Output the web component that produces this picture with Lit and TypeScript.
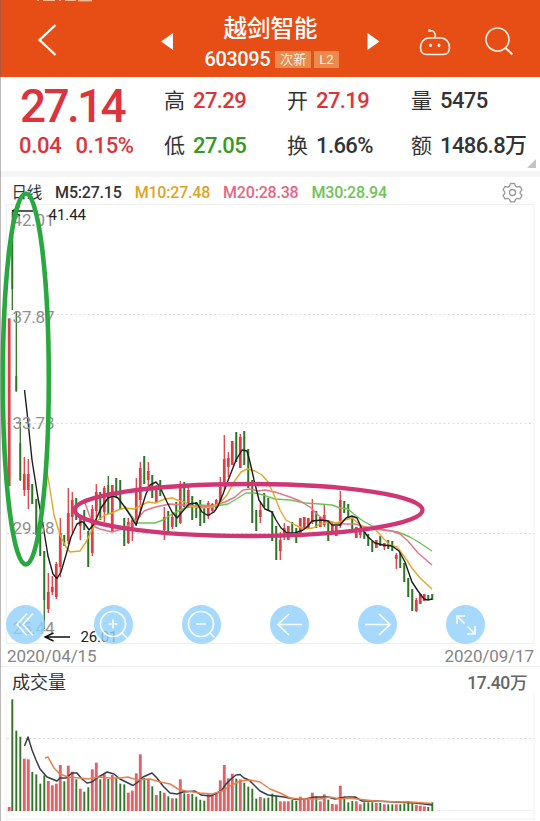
import { LitElement, html, svg, css } from 'lit';
import { customElement, property } from 'lit/decorators.js';

type Point = [number, number];

const STEP = 4;
const FIRST_X = 8.3;
const CHART_TOP = 204;
const VOLUME_TOP = 692;
const VOLUME_BASE = 119;

// one row per day: direction, high, low, then body top and bottom when they differ
const candles: [string, number, number, number?, number?][] = [
  ['r', 318.5, 486], ['g', 212, 310, 236, 289], ['g', 311, 391.5, 376, 391.5], ['g', 422, 481, 443, 480],
  ['r', 457, 496, 474, 490], ['r', 459, 509, 474, 490], ['g', 484, 504], ['g', 499, 535],
  ['g', 524, 556], ['g', 551, 629, 551, 600], ['r', 573, 613, 592, 609], ['r', 576, 595, 587, 592],
  ['r', 562, 599, 564, 597], ['r', 518, 577, 533, 567], ['g', 535, 546], ['r', 488, 544, 513, 541],
  ['r', 492, 533, 500, 517], ['g', 498, 520], ['r', 517, 540, 517, 526], ['g', 510, 530],
  ['g', 531, 567], ['r', 505, 556, 509, 553], ['r', 484, 521, 492, 511], ['g', 492, 520],
  ['r', 486, 522, 488, 512], ['g', 476, 514, 485, 514], ['r', 485, 532], ['g', 478, 497],
  ['g', 480, 510], ['g', 518, 546], ['r', 518, 544, 522, 543], ['r', 516, 541, 520, 528],
  ['r', 478, 526, 488, 524], ['r', 462, 517, 468, 500], ['g', 456, 484], ['r', 462, 488, 471, 480],
  ['g', 475, 498], ['r', 485, 503, 490, 502], ['g', 480, 496], ['r', 507, 540, 517, 530],
  ['g', 511, 532], ['r', 514, 529, 517, 527], ['g', 502, 527], ['r', 481, 524, 488, 523],
  ['g', 482, 507], ['r', 487, 507, 490, 503], ['g', 496, 520], ['g', 502, 518],
  ['g', 500, 526], ['g', 505, 523], ['r', 501, 519, 503, 516], ['r', 503, 513, 504, 511],
  ['r', 499, 510, 500, 508], ['r', 477, 503, 487, 501], ['r', 435, 490, 459, 482], ['r', 452, 477, 458, 467],
  ['r', 441, 465], ['g', 432, 462], ['r', 434, 468, 437, 468], ['g', 431, 465],
  ['g', 449, 488], ['g', 480, 523], ['g', 510, 531], ['r', 502, 523, 510, 517],
  ['g', 493, 507], ['g', 498, 511], ['g', 511, 541], ['g', 526, 560],
  ['r', 532, 560, 540, 551], ['r', 523, 540, 528, 534], ['r', 526, 540], ['g', 522, 535],
  ['g', 528, 543], ['r', 518, 533], ['r', 517, 529], ['r', 518, 529],
  ['r', 499, 524, 511, 522], ['g', 511, 528], ['r', 517, 527], ['r', 504, 527, 515, 525],
  ['g', 520, 541], ['r', 523, 534, 525, 531], ['r', 526, 536], ['r', 491, 528, 500, 526],
  ['g', 501, 513], ['g', 504, 517], ['g', 516, 529], ['r', 527, 538],
  ['r', 526, 538, 530, 535], ['g', 528, 539], ['g', 534, 546], ['g', 541, 552],
  ['r', 540, 548], ['g', 536, 546], ['r', 543, 550, 543, 547], ['g', 540, 549],
  ['g', 541, 551], ['r', 553, 569, 555, 559], ['g', 552, 568], ['g', 563, 582],
  ['g', 578, 597], ['g', 589, 611], ['r', 598, 612, 600, 611], ['r', 594, 604],
  ['r', 594, 601], ['g', 595, 600], ['g', 594, 600],
];

// bar heights in thirds of a pixel
const volumes = [
  12, 335, 241, 223, 157, 155, 117, 110, 82, 107, 90, 77, 82, 138, 89, 136, 118, 95, 67, 58,
  71, 125, 145, 95, 110, 96, 108, 100, 82, 80, 55, 61, 113, 170, 99, 97, 74, 48, 60, 55,
  44, 38, 38, 95, 53, 51, 51, 43, 34, 31, 50, 48, 52, 92, 138, 98, 112, 97, 95, 85,
  73, 67, 37, 42, 38, 40, 52, 47, 29, 29, 29, 33, 30, 43, 33, 35, 55, 43, 29, 50,
  34, 21, 20, 76, 38, 26, 30, 29, 20, 26, 26, 26, 24, 24, 20, 20, 20, 20, 20, 22,
  30, 22, 18, 16, 14, 12, 26,
];

const averages: { color: string; points: Point[] }[] = [
  {
    color: '#6cc455',
    points: [[125, 506], [130, 514], [137, 523], [155, 523], [163, 520], [172, 514], [185, 508], [200, 505],
      [215, 506], [228, 504], [238, 498], [246, 493], [255, 493], [263, 495], [275, 499], [290, 500],
      [305, 503], [320, 504], [332, 505], [340, 508], [348, 509], [355, 515], [363, 521], [372, 526],
      [385, 530], [398, 532], [410, 537], [420, 543], [432, 551]],
  },
  {
    color: '#e7738a',
    points: [[85, 503], [90, 517], [95, 527], [100, 529], [112, 532], [122, 529], [130, 524], [137, 520],
      [144, 511], [152, 508], [160, 506], [170, 504], [185, 505], [200, 507], [212, 506], [225, 502],
      [235, 497], [243, 490], [250, 489], [258, 491], [265, 490], [275, 492], [290, 497], [300, 501],
      [310, 507], [318, 515], [325, 520], [335, 523], [345, 524], [355, 524], [370, 528], [382, 530],
      [392, 531], [400, 534], [408, 541], [418, 553], [432, 565]],
  },
  {
    color: '#e5a62c',
    points: [[45, 462], [49, 483], [54, 515], [60, 535], [66, 547], [70, 552], [80, 551], [86, 542],
      [92, 530], [98, 520], [105, 515], [112, 513], [118, 510], [125, 508], [134, 509], [142, 505],
      [148, 502], [155, 503], [165, 499], [172, 498], [180, 501], [185, 502], [190, 506], [200, 508],
      [212, 507], [220, 503], [227, 495], [234, 482], [241, 472], [247, 469], [255, 471], [262, 475],
      [268, 482], [274, 495], [280, 510], [286, 520], [295, 525], [305, 529], [313, 528], [320, 524],
      [330, 522], [336, 523], [345, 520], [352, 518], [358, 523], [365, 528], [374, 528], [382, 537],
      [390, 545], [397, 547], [404, 556], [412, 568], [420, 578], [432, 589]],
  },
  {
    color: '#1d1d1d',
    points: [[24.5, 390], [27, 412], [32, 460], [38, 498], [43, 525], [48, 556], [53, 574], [57, 578.5],
      [61, 572], [66, 555], [71, 537], [77, 524], [82, 521.5], [85, 524], [89, 530], [94, 524],
      [101, 508], [108, 498], [113, 496], [118, 498], [124, 506], [130, 515], [136, 525], [140, 513],
      [146, 494], [150, 485], [156, 482], [160, 487], [167, 502], [172, 512], [177, 518], [182, 512],
      [189, 504], [197, 503], [202, 512], [208, 515.5], [214, 512], [218, 506], [223, 494], [229, 478],
      [236, 460], [242, 450], [247, 451], [250, 462], [254, 480], [259, 500], [265, 509], [272, 512],
      [276, 520], [281, 528], [287, 533], [295, 533], [303, 530], [308, 526], [312, 521], [322, 520],
      [328, 521], [332, 525], [340, 525], [346, 518], [352, 516], [357, 518], [361, 527], [368, 537],
      [375, 543], [383, 545], [392, 546], [399, 551], [405, 562], [412, 582], [418, 591], [424, 599],
      [428, 600], [432, 599]],
  },
];

const volumeAverages: { color: string; points: Point[] }[] = [
  {
    color: '#363c4a',
    points: [[24.5, 746], [28, 737], [32, 750], [36, 760], [40, 769], [47, 777], [52, 779], [57, 781],
      [60, 778], [66, 778], [72, 773], [77, 773], [82, 779], [87, 783], [92, 782], [97, 778],
      [107, 772], [114, 774], [120, 779], [128, 783], [133, 785.5], [138, 782], [143, 777], [152, 773],
      [157, 778], [163, 786], [170, 793], [177, 794], [183, 792], [195, 791], [201, 795], [210, 796],
      [217, 793], [222, 790], [226, 784], [231, 779], [236, 775], [240, 774.5], [244, 778], [249, 780],
      [254, 785], [260, 791], [268, 795], [276, 796], [284, 797], [296, 799.5], [305, 799], [315, 797],
      [328, 797], [335, 799], [345, 797], [355, 797], [362, 801], [375, 801], [395, 802], [415, 803],
      [424, 804], [432, 805]],
  },
  {
    color: '#ee7d4c',
    points: [[45, 758], [48, 757], [54, 768], [60, 774], [68, 777], [80, 778], [88, 779], [98, 777],
      [110, 778], [120, 778], [128, 777], [137, 780], [150, 779], [160, 782], [170, 784], [178, 789],
      [186, 791], [200, 793], [212, 794], [222, 791], [230, 786], [240, 781], [250, 780], [260, 782],
      [270, 789], [280, 793], [290, 798], [300, 799], [320, 799], [330, 797], [340, 799], [348, 798],
      [357, 799], [375, 801], [400, 802], [410, 802], [425, 803], [432, 803.5]],
  },
];

const toPoints = (points: Point[], top: number) => points.map(([x, y]) => `${x},${y - top}`).join(' ');

@customElement('stock-header')
export class StockHeader extends LitElement {
  static styles = [
    css`
      :host {
        display: grid;
        grid-template-columns: 150px 1fr 150px;
        height: 77px;
        background: #e64e16;
        color: #fff;
        position: relative;
      }
      .status {
        position: absolute;
        left: 36px;
        top: 0;
      }
      .side {
        display: flex;
        align-items: center;
        padding: 3px 0 0 36px;
      }
      .right {
        justify-content: space-between;
        margin-left: 29px;
        padding: 6px 26px 0 0;
      }
      .middle {
        display: flex;
        justify-content: space-between;
        padding: 0 10px 0 11px;
      }
      .arrow {
        margin-top: 33px;
      }
      .title {
        display: flex;
        flex-direction: column;
        align-items: center;
        padding-top: 14px;
      }
      .name {
        font: 500 23.5px/27px 'Noto Sans CJK SC', sans-serif;
      }
      .code {
        display: flex;
        align-items: center;
        gap: 5px;
        height: 20px;
        margin-top: 8px;
        font: 500 20px/20px Roboto, sans-serif;
        letter-spacing: -0.4px;
      }
      .code b {
        font: 400 13px/17px Roboto, 'Noto Sans CJK SC', sans-serif;
        letter-spacing: 0;
        background: #ea8a4c;
        color: #fff3e2;
        padding: 0 5px;
        margin-right: -2px;
      }
    `,
  ];

  render() {
    return html`
      <svg class="status" width="58" height="2" fill="#f6b795">
        <rect x="1" width="2" height="1" /><rect x="7" width="12" height="1" />
        <rect x="23" width="2" height="1" /><rect x="29" width="11" height="1" />
        <rect x="42" width="14" height="1.4" />
      </svg>
      <div class="side">
        <svg width="24" height="34" fill="none" stroke="#fff" stroke-width="2.4">
          <path d="M19.5 2 3.6 17l15.9 15" />
        </svg>
      </div>
      <div class="middle">
        <svg class="arrow" width="13" height="17" fill="#fff"><path d="M0 8.5 12 0v17z" /></svg>
        <div class="title">
          <div class="name">越剑智能</div>
          <div class="code"><span>603095</span><b>次新</b><b>L2</b></div>
        </div>
        <svg class="arrow" width="13" height="17" fill="#fff"><path d="M12.5 8.5.5 0v17z" /></svg>
      </div>
      <div class="side right">
        <svg width="32" height="30" fill="none" stroke="#fff0e4" stroke-width="1.6">
          <path d="M10 11h12c5.5 0 8.500 5 8.500 9.500s-2 7-6.500 7H8c-4.500 0-6.500-2.500-6.500-7S4.500 11 10 11Z" />
          <path d="M16 11c1-5-1-7.500-5-7.500" />
          <circle cx="10.5" cy="3.700" r="1.4" fill="#fff0e4" stroke="none" />
          <ellipse cx="11.5" cy="18.300" rx="1.400" ry="1.900" fill="#fff0e4" stroke="none" />
          <ellipse cx="20" cy="18.300" rx="1.400" ry="1.900" fill="#fff0e4" stroke="none" />
        </svg>
        <svg width="30" height="30" fill="none" stroke="#fff0e4" stroke-width="1.6">
          <circle cx="13.5" cy="12.5" r="11.5" />
          <path d="m21.5 21 7 6.500" stroke-width="2" />
        </svg>
      </div>
    `;
  }
}

@customElement('quote-panel')
export class QuotePanel extends LitElement {
  static styles = [
    css`
      :host {
        display: grid;
        grid-template-columns: 143px 123px 124px 1fr;
        height: 95px;
        padding-left: 21px;
        box-sizing: border-box;
        position: relative;
        background: #fff;
        font: 500 22px/26px Roboto, 'Noto Sans CJK SC', sans-serif;
        letter-spacing: -0.6px;
        color: #333;
        border-bottom: 1px solid #f6f6f6;
      }
      .up {
        color: #dc343c;
      }
      .down {
        color: #349a24;
      }
      .price {
        font-size: 46px;
        line-height: 46px;
        letter-spacing: -2.7px;
        margin: 6px 0 4px -1px;
      }
      .change {
        display: flex;
        gap: 14px;
        margin-left: -2px;
        letter-spacing: -0.3px;
      }
      .column {
        display: grid;
        grid-template-rows: 26px 26px;
        row-gap: 19px;
        padding-top: 11px;
      }
      .cell {
        display: flex;
        gap: 8px;
        white-space: nowrap;
      }
      .cell b {
        font: 400 21px/22px 'Noto Sans CJK SC', sans-serif;
        letter-spacing: 0;
      }
      .corner {
        position: absolute;
        right: 4px;
        bottom: 3px;
      }
    `,
  ];

  cell(label: string, value: string, tone = '') {
    return html`<div class="cell"><b>${label}</b><span class=${tone}>${value}</span></div>`;
  }

  render() {
    return html`
      <div class="up">
        <div class="price">27.14</div>
        <div class="change"><span>0.04</span><span>0.15%</span></div>
      </div>
      <div class="column">${this.cell('高', '27.29', 'up')}${this.cell('低', '27.05', 'down')}</div>
      <div class="column">${this.cell('开', '27.19', 'up')}${this.cell('换', '1.66%')}</div>
      <div class="column">${this.cell('量', '5475')}${this.cell('额', '1486.8万')}</div>
      <svg class="corner" width="9" height="9" fill="#c4c4c4"><path d="M9 0v9H0z" /></svg>
    `;
  }
}

@customElement('chart-button')
export class ChartButton extends LitElement {
  @property() icon = '';

  static styles = [
    css`
      :host {
        display: block;
        width: 39px;
        height: 39px;
        border-radius: 50%;
        background: rgba(148, 209, 252, 0.82);
      }
      svg {
        display: block;
        fill: none;
        stroke: #f7fcff;
        stroke-width: 1.7;
      }
    `,
  ];

  shape() {
    switch (this.icon) {
      case 'first':
        return svg`<path d="M21 8.5 11 19.5l10 11M27 8.5 17 19.5l10 11" />`;
      case 'in':
        return svg`<circle cx="19" cy="19" r="12.5" /><path d="M14.5 19h9M19 14.5v9M28 28l5.5 5.5" />`;
      case 'out':
        return svg`<circle cx="19" cy="19" r="12.5" /><path d="M14 19h10M28 28l4.5 4.5" />`;
      case 'left':
        return svg`<path d="M32 19.5H8M19 9 8 19.5 19 30" />`;
      case 'right':
        return svg`<path d="M7 19.5h24M21 9l11 10.5L21 30" />`;
      default:
        return svg`<path d="M11 19v-8h8M11 11l7.5 7.5M21.5 21.5 29 29M29 21v8h-8" />`;
    }
  }

  render() {
    return html`<svg width="39" height="39">${this.shape()}</svg>`;
  }
}

@customElement('price-chart')
export class PriceChart extends LitElement {
  static styles = [
    css`
      :host {
        display: block;
        position: relative;
        height: 440px;
      }
      svg {
        display: block;
      }
      .axis {
        font: 400 17px Roboto, sans-serif;
        fill: #8f8f8f;
      }
      .mark {
        font: 400 15px Roboto, sans-serif;
        fill: #222;
      }
      .tools {
        position: absolute;
        left: 6px;
        top: 400.5px;
        display: flex;
        gap: 49px;
      }
    `,
  ];

  candle([tone, high, low, top, bottom]: (typeof candles)[number], i: number) {
    const x = FIRST_X + STEP * i + (i ? 0 : 0.9);
    const color = tone === 'r' ? '#dd3f46' : '#2f7426';
    const width = tone === 'r' ? 2.8 : 1.9;
    const from = top ?? high;
    const to = bottom ?? low;
    return svg`
      <rect x=${x - 0.65} y=${high - CHART_TOP} width="1.3" height=${low - high} fill=${color} />
      <rect x=${x - width / 2} y=${from - CHART_TOP} width=${width} height=${to - from} fill=${color} />
    `;
  }

  label(text: string, y: number) {
    return svg`<text class="axis" x="12.5" y=${y} textLength="42">${text}</text>`;
  }

  render() {
    return html`
      <svg width="540" height="440">
        <path d="M6.5 .5H534V439.5H6.5Z" fill="none" stroke="#efefef" />
        <path d="M7 110.5H534M7 219.5H534M7 329.5H534" stroke="#dcdcdc" stroke-dasharray="2 2.5" />
        ${candles.map((c, i) => this.candle(c, i))}
        ${averages.map(
          (a) => svg`<polyline points=${toPoints(a.points, CHART_TOP)} fill="none" stroke=${a.color}
            stroke-width="1.4" stroke-linejoin="round" />`,
        )}
        ${this.label('42.01', 22)} ${this.label('37.87', 119)} ${this.label('33.73', 224.5)}
        ${this.label('29.58', 329.5)} ${this.label('25.44', 430)}
        <path d="M12 7h21M12 7l8-4.500M12 7l8 4.500" fill="none" stroke="#222" stroke-width="1.3" />
        <text class="mark" x="48.5" y="16" textLength="37.5">41.44</text>
        <path d="M45 433h25M53.5 429 45 433l8.500 4" fill="none" stroke="#111" stroke-width="1.4" />
        <text class="mark" x="80.5" y="438" textLength="37">26.01</text>
      </svg>
      <div class="tools">
        ${['first', 'in', 'out', 'left', 'right', 'full'].map(
          (icon) => html`<chart-button icon=${icon}></chart-button>`,
        )}
      </div>
    `;
  }
}

@customElement('volume-chart')
export class VolumeChart extends LitElement {
  static styles = [
    css`
      :host {
        display: block;
        height: 129px;
      }
      svg {
        display: block;
      }
    `,
  ];

  render() {
    return html`
      <svg width="540" height="129">
        <path d="M6.5 0V129M534 0V129" stroke="#f3f3f3" />
        <path d="M7 46.5H534" stroke="#dcdcdc" stroke-dasharray="2 2.5" />
        <path d="M7 118.5H534M7 127H534" stroke="#f1f1f1" />
        ${volumes.map((v, i) => {
          const red = candles[i][0] === 'r';
          const width = red ? 2.9 : 1.9;
          const x = FIRST_X + STEP * i + (i ? 0 : 0.9);
          return svg`<rect x=${x - width / 2} y=${VOLUME_BASE - v / 3} width=${width} height=${v / 3}
            fill=${red ? '#e0636a' : '#33742a'} />`;
        })}
        ${volumeAverages.map(
          (a) => svg`<polyline points=${toPoints(a.points, VOLUME_TOP)} fill="none" stroke=${a.color}
            stroke-width="1.5" stroke-linejoin="round" />`,
        )}
      </svg>
    `;
  }
}

@customElement('app-root')
export class AppRoot extends LitElement {
  static styles = [
    css`
      :host {
        display: block;
        position: relative;
        width: 540px;
        height: 821px;
        overflow: hidden;
        background: #fff;
        font-family: Roboto, 'Noto Sans CJK SC', sans-serif;
      }
      .band {
        height: 5px;
        background: #f5f5f5;
      }
      .legend {
        display: flex;
        align-items: center;
        gap: 13px;
        height: 27px;
        padding: 3px 17px 0 11.5px;
        box-sizing: border-box;
        font-size: 16px;
        font-weight: 500;
        letter-spacing: -0.2px;
        color: #333;
        white-space: nowrap;
      }
      .period {
        font: 400 15.5px/20px 'Noto Sans CJK SC', sans-serif;
        margin-top: -2px;
      }
      .m10 {
        color: #dfa31f;
      }
      .m20 {
        color: #e36783;
      }
      .m30 {
        color: #6fc257;
      }
      .gear {
        margin-left: auto;
      }
      .dates {
        display: flex;
        justify-content: space-between;
        align-items: center;
        height: 23px;
        padding: 1px 6px 0 7px;
        box-sizing: border-box;
        font-size: 17px;
        letter-spacing: -0.1px;
        color: #858585;
        border-bottom: 1px solid #efefef;
      }
      .volume {
        display: flex;
        justify-content: space-between;
        align-items: center;
        height: 25px;
        padding: 3px 13px 0 12px;
        box-sizing: border-box;
        font-size: 18px;
        color: #333;
      }
      .total {
        font-size: 17.5px;
        font-weight: 500;
        letter-spacing: -0.4px;
        color: #666;
      }
      .edge {
        position: absolute;
        left: 0;
        top: 0;
        width: 1px;
        height: 821px;
        background: rgba(110, 100, 100, 0.45);
      }
      .rings {
        position: absolute;
        left: 0;
        top: 0;
        fill: none;
      }
    `,
  ];

  render() {
    return html`
      <stock-header></stock-header>
      <quote-panel></quote-panel>
      <div class="band"></div>
      <div class="legend">
        <span class="period">日线</span>
        <span>M5:27.15</span>
        <span class="m10">M10:27.48</span>
        <span class="m20">M20:28.38</span>
        <span class="m30">M30:28.94</span>
        <svg class="gear" width="21" height="21" fill="none" stroke="#999" stroke-width="1.3">
          <path
            stroke-linejoin="round"
            d="M8.5 1.5h4l1 2.6 1.700 1 2.8-.6 2 3.400-1.800 2v1.600l1.800 2-2 3.400-2.800-.6-1.700 1-1 2.600h-4l-1-2.600-1.700-1-2.800.6-2-3.400 1.800-2V9.900L1 7.900l2-3.400 2.800.6 1.700-1z"
          />
          <circle cx="10.5" cy="10.5" r="3" />
        </svg>
      </div>
      <price-chart></price-chart>
      <div class="dates"><span>2020/04/15</span><span>2020/09/17</span></div>
      <div class="volume"><span>成交量</span><span class="total">17.40万</span></div>
      <volume-chart></volume-chart>
      <div class="edge"></div>
      <svg class="rings" width="540" height="821">
        <ellipse cx="25.8" cy="379" rx="23" ry="185.5" stroke="#2aa840" stroke-width="4.6" />
        <ellipse cx="248.5" cy="510" rx="174" ry="26" stroke="#cf3674" stroke-width="4.3" />
      </svg>
    `;
  }
}
